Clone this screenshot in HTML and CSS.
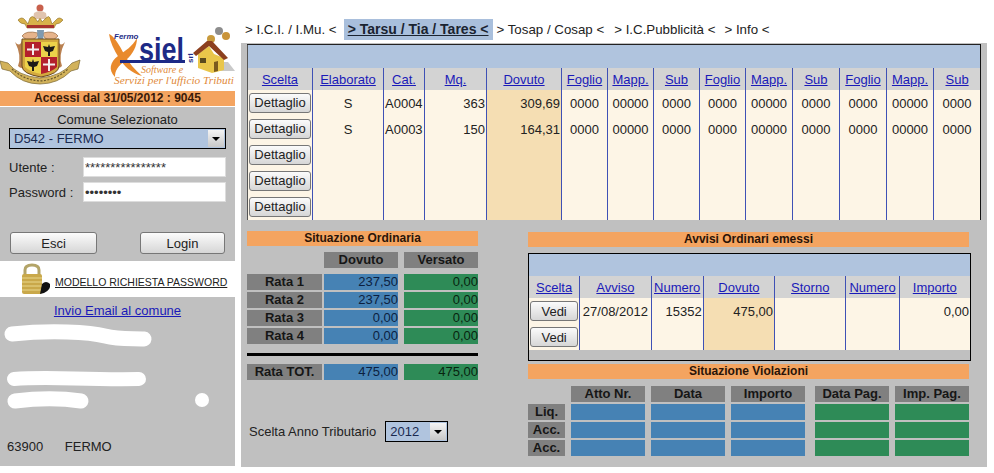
FILE: index.html
```html
<!DOCTYPE html>
<html lang="en">
<head>
<meta charset="UTF-8">
<meta name="viewport" content="width=device-width, initial-scale=1.0">
<title>Tarsu / Tia / Tares</title>
<link rel="stylesheet" href="styles.css">
</head>
<body>
<div class="page">

  <!-- colonna sinistra -->
  <div class="sidebar">
    <div class="logos">
      <svg class="logo-arms" viewBox="0 0 100 91">
        <!-- cartiglio -->
        <path d="M0 61 L8 63 Q18 76 40 78 Q62 76 72 63 L80 60 L78 69 L71 71 Q58 84 40 84 Q22 84 10 71 L2 69 Z" fill="#d2b25a" stroke="#7a6630" stroke-width=".7"/>
        <path d="M12 69 Q24 80 40 81 Q56 80 68 69" fill="none" stroke="#6b5a2c" stroke-width="1.200" stroke-dasharray="2 1.500"/>
        <!-- manto -->
        <path d="M15 42 Q20 48 22 40 L24 66 Q22 70 18 66 Q22 56 15 42 Z" fill="#b98050"/>
        <path d="M65 42 Q60 48 58 40 L56 66 Q58 70 62 66 Q58 56 65 42 Z" fill="#b98050"/>
        <path d="M22 36 Q26 30 38 33 Q38 39 30 40 Q26 41 22 36 Z" fill="#e6b48c" stroke="#8a5a30" stroke-width=".6"/>
        <path d="M58 36 Q54 30 43 33 Q43 39 50 40 Q54 41 58 36 Z" fill="#e6b48c" stroke="#8a5a30" stroke-width=".6"/>
        <path d="M37 30 L44 30 L43 42 L38 42 Z" fill="#7f9ab0"/>
        <!-- corona -->
        <circle cx="40" cy="8" r="3.500" fill="#c8604c"/>
        <path d="M34 13 Q40 9 46 13 L47 19 L33 19 Z" fill="#e0c4ae"/>
        <path d="M18 20 Q22 16 25 20 L28 24 L30 18 Q32 15 35 18 L38 22 Q40 15 42 22 L46 18 Q49 15 50 18 L52 24 L56 20 Q59 16 63 20 Q60 24 56 24 L54 28 L27 28 L25 24 Q20 24 18 20 Z" fill="#d8b24a" stroke="#8a6a22" stroke-width=".6"/>
        <rect x="27" y="25" width="27" height="3" fill="#a8332c"/>
        <!-- scudo -->
        <path d="M22 39 H59 V66 Q59 74 41 77 Q22 74 22 66 Z" fill="#d3a93e" stroke="#6b4a20"/>
        <rect x="25" y="42" width="16" height="15" fill="#b3202c"/>
        <rect x="41" y="42" width="16" height="15" fill="#ecd24a"/>
        <path d="M25 57 H41 V74 Q30 72 25 67 Z" fill="#ecd24a"/>
        <path d="M41 57 H57 V67 Q52 72 41 74 Z" fill="#b3202c"/>
        <path d="M33 44 V55 M27 49.500 H39 M49 59 V71 M43 64.500 H55" stroke="#f3eeee" stroke-width="2"/>
        <path d="M49 44 L50 47 L55 46 L53 51 L50 52 L50 56 L48 56 L48 52 L45 51 L43 46 L48 47 Z" fill="#1c1a18"/>
        <path d="M33 59 L34 62 L39 61 L37 66 L34 67 L34 71 L32 71 L32 67 L29 66 L27 61 L32 62 Z" fill="#1c1a18"/>
      </svg>
      <svg class="logo-siel" viewBox="100 0 135 91">
        <path d="M109 34 C114 36 120 46 124 54 C129 63 135 70 142 76 C131 73 124 66 119 58 C114 50 110 42 109 34 Z" fill="#e98a2c"/>
        <path d="M137 38 C132 47 126 50 118 56 C110 62 108 70 115 77 C115 70 118 66 126 60 C133 54 137 46 137 38 Z" fill="#e98a2c"/>
        <rect x="120" y="60" width="65" height="3" fill="#1d2a86"/>
        <text class="siel-city" x="114" y="39">Fermo</text>
        <text class="siel-name" x="139" y="61" textLength="45" lengthAdjust="spacingAndGlyphs">siel</text>
        <text class="siel-srl" transform="translate(193 63) rotate(-90)">srl</text>
        <text class="siel-slogan" x="141" y="73">Software e</text>
        <text class="siel-slogan" x="114" y="84" textLength="120" lengthAdjust="spacingAndGlyphs">Servizi per l'ufficio Tributi</text>
        <!-- casa -->
        <path d="M214 71 L235 71 L228 62 L222 62 Z" fill="#c9c9c9"/>
        <circle cx="219" cy="31" r="4" fill="#8d8d8d"/>
        <circle cx="226" cy="36" r="4" fill="#c9943a"/>
        <circle cx="211" cy="39" r="4" fill="#c89a3c"/>
        <path d="M198 54 L209 46 L214 54 L224 58 L224 70 L212 73 L198 68 Z" fill="#e9c64a"/>
        <path d="M193 53 L207 41 L212 41 L228 58 L224 60 L209 46 L196 56 Z" fill="#8c3f1e"/>
        <rect x="200" y="58" width="6" height="5" fill="#5a4a1e"/>
        <path d="M214 62 L218 61 L218 71 L214 72 Z" fill="#7a5a1e"/>
      </svg>
    </div>
    <div class="access-bar">Accessi dal 31/05/2012 : 9045</div>

    <div class="side-box">
      <form class="login">
        <div class="login-title">Comune Selezionato</div>
        <div class="combo combo-wide">
          <select class="combo-select"><option>D542 - FERMO</option></select>
          <span class="combo-arrow"></span>
        </div>
        <div class="login-row">
          <label for="utente">Utente :</label>
          <input type="text" id="utente" value="****************">
        </div>
        <div class="login-row">
          <label for="password">Password :</label>
          <input type="password" id="password" value="abcdefgh">
        </div>
        <div class="login-buttons">
          <button type="button" class="btn btn-esci">Esci</button>
          <button type="submit" class="btn btn-login">Login</button>
        </div>
      </form>

      <div class="request-strip">
        <svg class="padlock" viewBox="0 0 32 33">
          <path d="M6 13 V7 Q6 2 13 2 Q20 2 20 7 V13" fill="none" stroke="#b3a468" stroke-width="3"/>
          <rect x="3" y="11" width="20" height="20" rx="2" fill="#c9a84a"/>
          <path d="M3 15 H23 M3 19 H23 M3 23 H23 M3 27 H23" stroke="#e9d78c" stroke-width="1"/>
          <path d="M23 21 Q27 17 31 21 Q32 27 25 30 L21 31 Z" fill="#111"/>
        </svg>
        <a href="#" class="request-link">MODELLO RICHIESTA PASSWORD</a>
      </div>

      <div class="email-row"><a href="#">Invio Email al comune</a></div>

      <div class="address">
        <div class="address-zip">63900 <span class="address-city">FERMO</span></div>
        <svg class="blobs" viewBox="0 0 235 130">
          <path d="M12 11 C50 7 90 9 105 13 C120 17 135 15 144 16" fill="none" stroke="#fff" stroke-width="15" stroke-linecap="round"/>
          <path d="M14 56 C50 53 80 57 139 56" fill="none" stroke="#fff" stroke-width="14" stroke-linecap="round"/>
          <path d="M15 78 C40 75 60 75 81 78" fill="none" stroke="#fff" stroke-width="15" stroke-linecap="round"/>
          <circle cx="202" cy="77" r="7" fill="#fff"/>
        </svg>
      </div>
    </div>
  </div>

  <!-- parte destra -->
  <div class="main">
    <div class="tabs">
      <a href="#" class="tab tab-ici">&gt; I.C.I. / I.Mu. &lt;</a>
      <a href="#" class="tab tab-active">&gt; Tarsu / Tia / Tares &lt;</a>
      <a href="#" class="tab tab-tosap">&gt; Tosap / Cosap &lt;</a>
      <a href="#" class="tab tab-pub">&gt; I.C.Pubblicità &lt;</a>
      <a href="#" class="tab tab-info">&gt; Info &lt;</a>
    </div>

    <div class="panel">
      <table class="grid grid-tarsu">
        <colgroup>
          <col class="w65"><col class="w71"><col class="w41"><col class="w62"><col class="w75">
          <col class="w46"><col class="w46"><col class="w46"><col class="w46">
          <col class="w47"><col class="w47"><col class="w47"><col class="w47"><col class="w47">
        </colgroup>
        <tr class="band"><td colspan="14"></td></tr>
        <tr class="head">
          <th><a href="#">Scelta</a></th><th><a href="#">Elaborato</a></th><th><a href="#">Cat.</a></th><th><a href="#">Mq.</a></th>
          <th><a href="#">Dovuto</a></th><th><a href="#">Foglio</a></th><th><a href="#">Mapp.</a></th><th><a href="#">Sub</a></th>
          <th><a href="#">Foglio</a></th><th><a href="#">Mapp.</a></th><th><a href="#">Sub</a></th>
          <th><a href="#">Foglio</a></th><th><a href="#">Mapp.</a></th><th><a href="#">Sub</a></th>
        </tr>
        <tr>
          <td class="c"><button type="button" class="btn btn-row">Dettaglio</button></td><td class="c">S</td><td>A0004</td><td class="r">363</td><td class="r due">309,69</td>
          <td class="c">0000</td><td class="c">00000</td><td class="c">0000</td><td class="c">0000</td><td class="c">00000</td><td class="c">0000</td><td class="c">0000</td><td class="c">00000</td><td class="c">0000</td>
        </tr>
        <tr>
          <td class="c"><button type="button" class="btn btn-row">Dettaglio</button></td><td class="c">S</td><td>A0003</td><td class="r">150</td><td class="r due">164,31</td>
          <td class="c">0000</td><td class="c">00000</td><td class="c">0000</td><td class="c">0000</td><td class="c">00000</td><td class="c">0000</td><td class="c">0000</td><td class="c">00000</td><td class="c">0000</td>
        </tr>
        <tr>
          <td class="c"><button type="button" class="btn btn-row">Dettaglio</button></td><td></td><td></td><td></td><td class="due"></td>
          <td></td><td></td><td></td><td></td><td></td><td></td><td></td><td></td><td></td>
        </tr>
        <tr>
          <td class="c"><button type="button" class="btn btn-row">Dettaglio</button></td><td></td><td></td><td></td><td class="due"></td>
          <td></td><td></td><td></td><td></td><td></td><td></td><td></td><td></td><td></td>
        </tr>
        <tr>
          <td class="c"><button type="button" class="btn btn-row">Dettaglio</button></td><td></td><td></td><td></td><td class="due"></td>
          <td></td><td></td><td></td><td></td><td></td><td></td><td></td><td></td><td></td>
        </tr>
      </table>

      <div class="lower">
        <div class="ordinaria">
          <div class="section-title">Situazione Ordinaria</div>
          <div class="cells cells-head">
            <div class="cell cell-blank"></div>
            <div class="cell cell-gray cell-wide">Dovuto</div>
            <div class="cell cell-gray cell-wide cell-split">Versato</div>
          </div>
          <div class="cells"><div class="cell cell-gray cell-label">Rata 1</div><div class="cell cell-blue cell-wide">237,50</div><div class="cell cell-green cell-wide cell-split">0,00</div></div>
          <div class="cells"><div class="cell cell-gray cell-label">Rata 2</div><div class="cell cell-blue cell-wide">237,50</div><div class="cell cell-green cell-wide cell-split">0,00</div></div>
          <div class="cells"><div class="cell cell-gray cell-label">Rata 3</div><div class="cell cell-blue cell-wide">0,00</div><div class="cell cell-green cell-wide cell-split">0,00</div></div>
          <div class="cells"><div class="cell cell-gray cell-label">Rata 4</div><div class="cell cell-blue cell-wide">0,00</div><div class="cell cell-green cell-wide cell-split">0,00</div></div>
          <div class="total-rule"></div>
          <div class="cells"><div class="cell cell-gray cell-label">Rata TOT.</div><div class="cell cell-blue cell-wide">475,00</div><div class="cell cell-green cell-wide cell-split">475,00</div></div>
          <div class="year-row">
            <label>Scelta Anno Tributario</label>
            <div class="combo combo-year">
              <select class="combo-select"><option>2012</option></select>
              <span class="combo-arrow"></span>
            </div>
          </div>
        </div>

        <div class="avvisi">
          <div class="section-title">Avvisi Ordinari emessi</div>
          <table class="grid grid-avvisi">
            <colgroup>
              <col class="w51"><col class="w71"><col class="w52"><col class="w71"><col class="w71"><col class="w53"><col class="w71">
            </colgroup>
            <tr class="band"><td colspan="7"></td></tr>
            <tr class="head">
              <th><a href="#">Scelta</a></th><th><a href="#">Avviso</a></th><th><a href="#">Numero</a></th><th><a href="#">Dovuto</a></th>
              <th><a href="#">Storno</a></th><th><a href="#">Numero</a></th><th><a href="#">Importo</a></th>
            </tr>
            <tr>
              <td class="c"><button type="button" class="btn btn-row">Vedi</button></td><td class="c">27/08/2012</td><td class="r">15352</td><td class="r due">475,00</td><td></td><td></td><td class="r">0,00</td>
            </tr>
            <tr>
              <td class="c"><button type="button" class="btn btn-row">Vedi</button></td><td></td><td></td><td class="due"></td><td></td><td></td><td></td>
            </tr>
            <tr class="foot"><td colspan="7"></td></tr>
          </table>

          <div class="section-title section-viol">Situazione Violazioni</div>
          <div class="cells cells-head-viol">
            <div class="cell cell-tag cell-blank"></div>
            <div class="cell cell-gray cell-wide">Atto Nr.</div>
            <div class="cell cell-gray cell-wide">Data</div>
            <div class="cell cell-gray cell-wide">Importo</div>
            <div class="cell cell-gray cell-wide cell-split">Data Pag.</div>
            <div class="cell cell-gray cell-wide">Imp. Pag.</div>
          </div>
          <div class="cells cells-viol">
            <div class="cell cell-gray cell-tag">Liq.</div><div class="cell cell-blue cell-wide"></div><div class="cell cell-blue cell-wide"></div><div class="cell cell-blue cell-wide"></div><div class="cell cell-green cell-wide cell-split"></div><div class="cell cell-green cell-wide"></div>
          </div>
          <div class="cells cells-viol">
            <div class="cell cell-gray cell-tag">Acc.</div><div class="cell cell-blue cell-wide"></div><div class="cell cell-blue cell-wide"></div><div class="cell cell-blue cell-wide"></div><div class="cell cell-green cell-wide cell-split"></div><div class="cell cell-green cell-wide"></div>
          </div>
          <div class="cells cells-viol">
            <div class="cell cell-gray cell-tag">Acc.</div><div class="cell cell-blue cell-wide"></div><div class="cell cell-blue cell-wide"></div><div class="cell cell-blue cell-wide"></div><div class="cell cell-green cell-wide cell-split"></div><div class="cell cell-green cell-wide"></div>
          </div>
        </div>
      </div>
    </div>
  </div>
</div>
</body>
</html>
```

FILE: styles.css
```css
body {
  margin: 0;
  background-color: #fff;
  color: #222;
  font-family: "Liberation Sans", Arial, sans-serif;
  font-size: 13px;
}

a {
  color: #1a1ab8;
}

.page {
  display: flex;
  width: 994px;
  height: 473px;
  overflow: hidden;
}

/* colonna sinistra */
.sidebar {
  width: 235px;
  flex-shrink: 0;
}

.logos {
  display: flex;
  height: 91px;
}

.logo-arms {
  width: 100px;
  height: 91px;
}

.logo-siel {
  width: 135px;
  height: 91px;
}

.siel-city {
  font: italic bold 8px "Liberation Sans", sans-serif;
  fill: #1d2a86;
}

.siel-name {
  font: bold 33px "Liberation Sans", sans-serif;
  fill: #1d2a86;
}

.siel-srl {
  font: bold 8px "Liberation Sans", sans-serif;
  fill: #1d2a86;
}

.siel-slogan {
  font: italic 10px "Liberation Serif", serif;
  fill: #df8a3a;
}

.access-bar {
  height: 15px;
  line-height: 15px;
  background-color: #f4a460;
  color: #3a1a08;
  font-size: 12px;
  font-weight: bold;
  text-align: center;
}

.side-box {
  margin-top: 1px;
  height: 359px;
  background-color: #c0c0c0;
}

.login {
  height: 154px;
  padding: 4px 9px 0;
  box-sizing: border-box;
}

.login-title {
  height: 17px;
  line-height: 17px;
  text-align: center;
}

.combo {
  display: flex;
  border: 1px solid #000;
  background-color: #b0c4de;
  box-sizing: border-box;
}

.combo-wide {
  width: 217px;
  height: 21px;
}

.combo-year {
  width: 63px;
  height: 21px;
}

.combo-select {
  flex: 1;
  min-width: 0;
  border: 0;
  padding: 0 0 0 4px;
  background: transparent;
  color: #1a2a50;
  font-family: inherit;
  font-size: 13px;
  appearance: none;
}

.combo-arrow {
  width: 16px;
  margin: 1px;
  background: linear-gradient(#f4f4f4, #c8c8c8);
  position: relative;
}

.combo-arrow::after {
  content: "";
  position: absolute;
  left: 4px;
  top: 7px;
  border-left: 4px solid transparent;
  border-right: 4px solid transparent;
  border-top: 4px solid #000;
}

.login-row {
  display: flex;
  align-items: center;
  height: 20px;
  margin-top: 5px;
}

.combo + .login-row {
  margin-top: 8px;
}

.login-row label {
  width: 74px;
}

.login-row input {
  width: 143px;
  height: 20px;
  box-sizing: border-box;
  border: 1px solid #ddd;
  padding: 0 1px;
  color: #333;
  font-family: "Liberation Sans", sans-serif;
  font-size: 13px;
}

.login-buttons {
  display: flex;
  margin-top: 30px;
}

.btn {
  border: 1px solid #777;
  border-radius: 3px;
  background: linear-gradient(#fbfbfb, #d6d6d6);
  color: #222;
  font-family: inherit;
  font-size: 13px;
  padding: 0;
}

.btn-esci {
  width: 87px;
  height: 22px;
  margin-left: 1px;
}

.btn-login {
  width: 85px;
  height: 22px;
  margin-left: 43px;
}

.btn-row {
  display: block;
  width: 100%;
  height: 20px;
  box-sizing: border-box;
  margin: 0 auto;
}

.request-strip {
  display: flex;
  align-items: center;
  height: 36px;
  background-color: #fff;
  padding-left: 19px;
  box-sizing: border-box;
}

.padlock {
  width: 32px;
  height: 33px;
  margin-right: 4px;
}

.request-link {
  margin-top: 6px;
  color: #222;
  font-size: 10.5px;
  white-space: nowrap;
}

.email-row {
  height: 26px;
  line-height: 27px;
  text-align: center;
}

.address {
  position: relative;
  height: 143px;
}

.address-zip {
  padding: 116px 0 0 7px;
  font-size: 13px;
}

.address-city {
  margin-left: 18px;
}

.blobs {
  position: absolute;
  left: 0;
  top: 0;
  width: 235px;
  height: 130px;
}

/* parte destra */
.main {
  width: 746px;
  margin-left: 6px;
}

.tabs {
  display: flex;
  align-items: center;
  height: 43px;
  padding: 15px 0 0 4px;
  box-sizing: border-box;
  font-size: 13.3px;
  white-space: nowrap;
}

.tab {
  color: #222;
  text-decoration: none;
}

.tab-active {
  margin-left: 7px;
  padding: 2px 4px 3px;
  background-color: #a9bfdc;
  color: #1a2330;
  font-weight: bold;
  font-size: 14px;
  text-decoration: underline;
}

.tab-tosap {
  margin-left: 4px;
}

.tab-pub {
  margin-left: 10px;
}

.tab-info {
  margin-left: 9px;
}

.panel {
  height: 424px;
  padding: 1px 6px 0;
  box-sizing: border-box;
  background-color: #c0c0c0;
}

.grid {
  table-layout: fixed;
  border-collapse: collapse;
  background-color: #fdf5e6;
}

.grid-tarsu {
  width: 734px;
  border-top: 1px solid #222;
  border-left: 1px solid #555;
  border-right: 1px solid #111;
}

.w41 { width: 41px; }
.w46 { width: 46px; }
.w47 { width: 47px; }
.w51 { width: 51px; }
.w52 { width: 52px; }
.w53 { width: 53px; }
.w62 { width: 62px; }
.w65 { width: 65px; }
.w71 { width: 71px; }
.w75 { width: 75px; }

.grid td,
.grid th {
  height: 26px;
  padding: 1px 1px 0;
  box-sizing: border-box;
  border-left: 1px solid #3f51b5;
  font-weight: normal;
  overflow: hidden;
  white-space: nowrap;
}

.grid tr > :first-child {
  border-left: 0;
}

.grid td:has(> .btn-row) {
  padding-top: 0;
}

.grid .band td {
  height: 23px;
  padding: 0;
  background-color: #b0c4de;
}

.grid .head th {
  height: 22px;
  background-color: #d3d3d3;
}

.grid .c { text-align: center; }
.grid .r { text-align: right; }
.grid .due { background-color: #f5deb3; }

.lower {
  display: flex;
  margin-top: 11px;
}

.ordinaria {
  width: 231px;
}

.avvisi {
  width: 443px;
  margin-left: 50px;
  margin-top: 1px;
}

.section-title {
  height: 15px;
  line-height: 15px;
  background-color: #f4a460;
  color: #2a1408;
  font-size: 12px;
  font-weight: bold;
  text-align: center;
}

.avvisi .section-title {
  width: 441px;
}

.section-title.section-viol {
  margin-top: 3px;
}

.cells {
  display: flex;
  gap: 2px;
  margin-top: 2px;
}

.cells-head {
  margin-top: 6px;
  margin-bottom: 6px;
}

.ordinaria .cell-wide {
  width: 74px;
}

.cell {
  height: 16px;
  line-height: 16px;
  font-size: 13px;
  font-weight: bold;
  text-align: center;
  box-sizing: border-box;
}

.cell-blank {
  width: 75px;
  background: transparent;
}

.cell-label {
  width: 75px;
}

.cell-gray {
  background-color: #808080;
  color: #161616;
}

.cell-blue {
  background-color: #4682b4;
  color: #0c1f40;
  font-weight: normal;
  text-align: right;
}

.cell-green {
  background-color: #2e8b57;
  color: #08240f;
  font-weight: normal;
  text-align: right;
}

.cell-split {
  margin-left: 4px;
}

.total-rule {
  height: 3px;
  margin: 9px 0 8px;
  background-color: #000;
}

.year-row {
  display: flex;
  align-items: center;
  gap: 9px;
  margin-top: 41px;
  padding-left: 2px;
  font-size: 13px;
}

.grid-avvisi {
  width: 443px;
  margin-top: 6px;
  border: 1px solid #000;
}

.grid-avvisi .foot td {
  height: 10px;
  padding: 0;
  background-color: #c0c0c0;
  border-left: 0;
}

.cells-head-viol {
  margin-top: 7px;
  gap: 6px;
}

.cells-viol {
  gap: 6px;
}

.cell-tag {
  width: 37px;
}

.avvisi .cell-wide {
  width: 74px;
}
```
